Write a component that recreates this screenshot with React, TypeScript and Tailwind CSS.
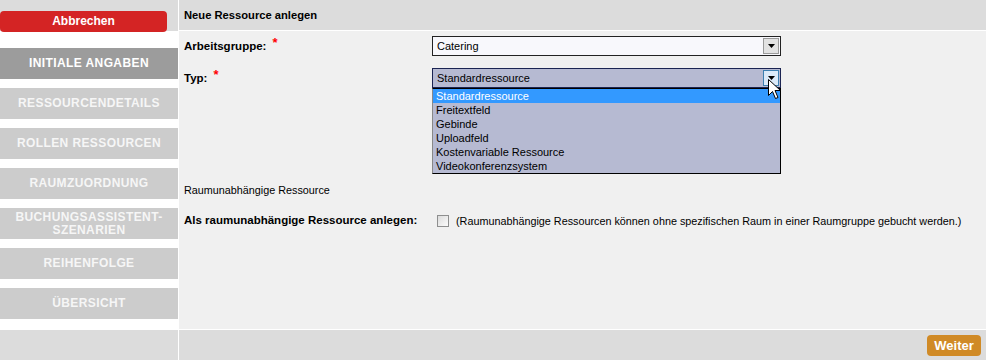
import React from 'react';

const steps = [
  { label: 'INITIALE ANGABEN', active: true },
  { label: 'RESSOURCENDETAILS' },
  { label: 'ROLLEN RESSOURCEN' },
  { label: 'RAUMZUORDNUNG' },
  { label: 'BUCHUNGSASSISTENT-\nSZENARIEN' },
  { label: 'REIHENFOLGE' },
  { label: 'ÜBERSICHT' },
];

const typOptions = [
  'Standardressource',
  'Freitextfeld',
  'Gebinde',
  'Uploadfeld',
  'Kostenvariable Ressource',
  'Videokonferenzsystem',
];

const Arrow = () => (
  <svg width="7" height="4" viewBox="0 0 7 4">
    <path d="M0 0H7L3.5 4Z" fill="#000" />
  </svg>
);

const Required = () => (
  <span className="relative -top-[3px] ml-[6px] text-[13px] font-bold text-[#ff0000]">*</span>
);

const App: React.FC = () => {
  return (
    <div className="flex w-[986px] h-[360px] bg-white font-['Liberation_Sans',Arial,sans-serif] text-black">
      {/* Sidebar */}
      <div className="flex flex-col w-[178px]">
        <div className="h-[31px] bg-[#dcdcdc] pt-[8px]">
          <button className="w-[167px] h-[21px] rounded-[4px] bg-[#d42424] text-white text-[12px] font-bold leading-[21px]">
            Abbrechen
          </button>
        </div>
        <div className="flex flex-col gap-[9px] mt-[17px]">
          {steps.map(s => (
            <div
              key={s.label}
              className={`h-[31px] flex items-center justify-center text-center whitespace-pre-line text-[12px] tracking-[0.4px] font-bold leading-[13px] ${
                s.active ? 'bg-[#9c9c9c] text-white' : 'bg-[#cccccc] text-[#f6f6f6]'
              }`}
            >
              {s.label}
            </div>
          ))}
        </div>
        <div className="flex-1" />
        <div className="h-[30px] bg-[#dcdcdc]" />
      </div>

      <div className="w-[1px] bg-white" />

      {/* Main */}
      <div className="flex flex-col flex-1">
        <div className="h-[31px] bg-[#dcdcdc] border-b border-white flex items-center px-[5px] text-[11.2px] font-bold">
          Neue Ressource anlegen
        </div>
        <div className="relative flex-1 bg-[#f0f0f0] border-b border-white px-[5px]">
          <div className="flex items-center h-[20px] mt-[5px]">
            <div className="w-[248px] text-[11.5px] font-bold">
              Arbeitsgruppe:<Required />
            </div>
            <div className="flex items-center justify-between w-[349px] h-[20px] border border-[#222] bg-[#f8f8fc] pl-[4px] pr-[1px] text-[11px]">
              <span>Catering</span>
              <span className="flex items-center justify-center w-[16px] h-[16px] bg-[#e2e2e2] border border-[#9a9a9a]">
                <Arrow />
              </span>
            </div>
          </div>

          <div className="flex items-center h-[20px] mt-[12px]">
            <div className="w-[248px] text-[11.5px] font-bold">
              Typ:<Required />
            </div>
            <div className="flex items-center justify-between w-[349px] h-[20px] border border-[#1b2452] bg-[#b6bad2] pl-[4px] pr-[1px] text-[11px]">
              <span>Standardressource</span>
              <span className="flex items-center justify-center w-[16px] h-[16px] bg-[#dbeaf9] border border-[#3c7fb1]">
                <Arrow />
              </span>
            </div>
          </div>

          <div className="mt-[95px] h-[14px] text-[10.8px] leading-[14px]">Raumunabhängige Ressource</div>

          <div className="flex items-center h-[20px] mt-[14px]">
            <div className="w-[248px] text-[11.5px] font-bold">Als raumunabhängige Ressource anlegen:</div>
            <span className="ml-[5px] w-[12px] h-[12px] border border-[#8e8f8f] bg-gradient-to-br from-[#dcdcdc] to-[#fbfbfb]" />
            <span className="ml-[7px] text-[10.8px]">
              (Raumunabhängige Ressourcen können ohne spezifischen Raum in einer Raumgruppe gebucht werden.)
            </span>
          </div>

          {/* Open dropdown list */}
          <div className="absolute top-[57px] left-[253px] w-[349px] bg-[#b6bad2] border border-black border-l-[#888] text-[11px]">
            {typOptions.map((o, i) => (
              <div
                key={o}
                className={`h-[14px] leading-[14px] pl-[3px] ${i === 0 ? 'bg-[#3399ff] text-white' : ''}`}
              >
                {o}
              </div>
            ))}
          </div>

          {/* Mouse cursor */}
          <svg className="absolute top-[48px] left-[589px]" width="13" height="20" viewBox="0 0 13 20">
            <path
              d="M0.5 0.5V16.5L4.5 12.5L7.5 19.5L10 18.5L7 11.5H12.5Z"
              fill="#fff"
              stroke="#000"
              strokeWidth="1"
              strokeLinejoin="miter"
            />
          </svg>
        </div>
        <div className="h-[30px] bg-[#dcdcdc] flex items-center justify-end pr-[5px]">
          <button className="w-[54px] h-[21px] rounded-[4px] bg-[#d08a26] text-white text-[13px] font-bold leading-[21px]">
            Weiter
          </button>
        </div>
      </div>
    </div>
  );
};

export default App;
